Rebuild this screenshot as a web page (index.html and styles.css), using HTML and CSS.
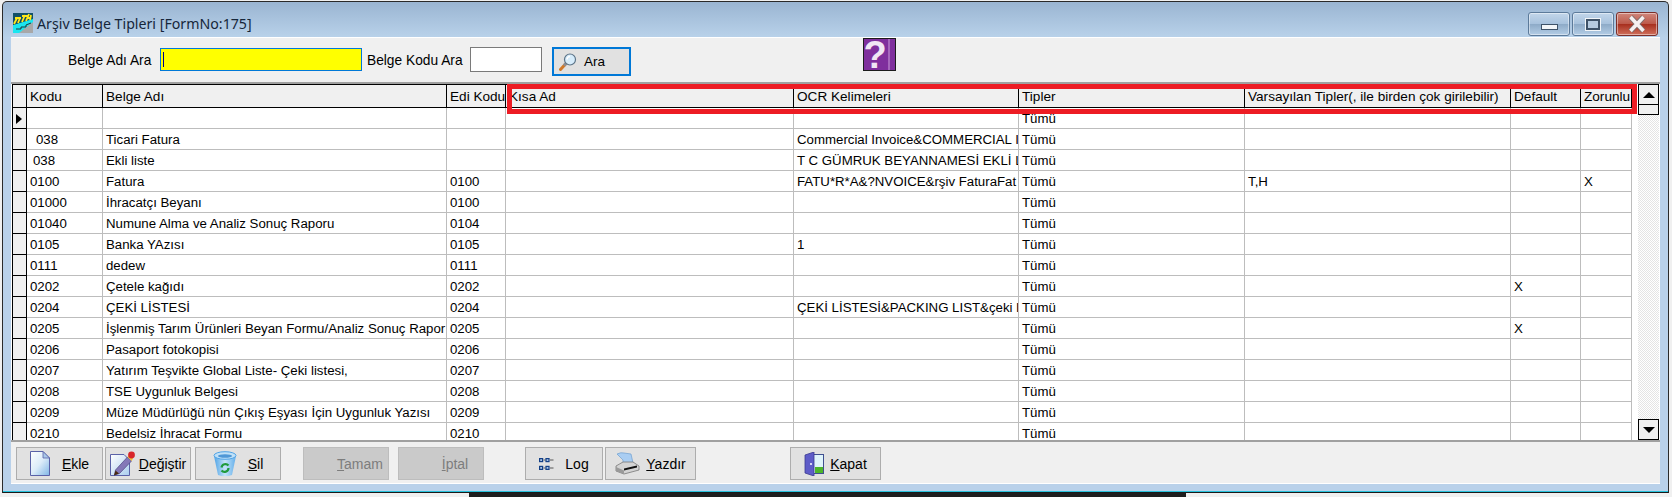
FILE: index.html
```html
<!DOCTYPE html>
<html lang="tr">
<head>
<meta charset="utf-8">
<title>Arşiv Belge Tipleri</title>
<link rel="stylesheet" href="styles.css">
</head>
<body>
<div class="window">
  <div class="titlebar">
    <svg class="app-icon" width="20" height="20" viewBox="0 0 20 20"><rect width="20" height="20" fill="#0f5f70"/><path d="M0 12L20 5V10L8 20H0Z" fill="#19e6f0"/><path d="M6 20L20 9V20Z" fill="#a8a8a8"/><path d="M0 0H20V6L0 12Z" fill="#125068"/><path d="M1 11L4 5M2 5H8M7 5L5 10M9 9L12 2M9 3H15M13 8L16 1M14 5H18M18 2L17 7" stroke="#ffe81a" stroke-width="1.8" fill="none"/><path d="M3 16L8 16L8 14L13 14L13 12L18 10" stroke="#222" stroke-width=".9" fill="none"/></svg>
    <span class="title-text">Arşiv Belge Tipleri [FormNo:175]</span>
    <div class="controls">
      <div class="ctl"><span class="ctl-min"></span></div>
      <div class="ctl"><span class="ctl-max"></span></div>
      <div class="ctl ctl-close"><svg width="22" height="20" viewBox="0 0 22 20"><path d="M4.5 3L17.5 17M17.5 3L4.5 17" stroke="#7a6a6a" stroke-width="5.4"/><path d="M4.5 3L17.5 17M17.5 3L4.5 17" stroke="#f6f0f0" stroke-width="3.6"/></svg></div>
    </div>
  </div>
  <div class="client">
    <div class="toolbar">
      <label class="lbl lbl-name">Belge Adı Ara</label>
      <div class="input input-name"><span class="caret"></span></div>
      <label class="lbl lbl-code">Belge Kodu Ara</label>
      <div class="input input-code"></div>
      <div class="btn-search">
        <svg width="18" height="18" viewBox="0 0 18 18"><path d="M6.5 11L1.5 16.5" stroke="#d0792a" stroke-width="3" stroke-linecap="round"/><path d="M7 10.5L5 12.5" stroke="#8a8f98" stroke-width="3"/><circle cx="11" cy="6.5" r="5.5" fill="#d6ecfb" stroke="#5c7488" stroke-width="1.2"/><path d="M8 6.5A3 3 0 0 1 11 3.5" stroke="#ffffff" stroke-width="1.4" fill="none"/></svg>
        <span>Ara</span>
      </div>
      <svg class="help" width="33" height="33" viewBox="0 0 33 33"><rect x=".5" y=".5" width="32" height="32" fill="#7f2f9d" stroke="#1c1c1c"/><rect x="25" y="1" width="2" height="31" fill="#a667bd"/><text x="12" y="30" text-anchor="middle" class="help-q">?</text></svg>
    </div>
    <div class="gridbox">
      <div class="gridview">
        <table class="grid">
          <colgroup><col class="c0"><col class="c1"><col class="c2"><col class="c3"><col class="c4"><col class="c5"><col class="c6"><col class="c7"><col class="c8"><col class="c9"></colgroup>
          <thead><tr><th class="ind"></th><th>Kodu</th><th>Belge Adı</th><th>Edi Kodu</th><th>Kısa Ad</th><th>OCR Kelimeleri</th><th>Tipler</th><th>Varsayılan Tipler(, ile birden çok girilebilir)</th><th>Default</th><th>Zorunlu</th></tr></thead>
          <tbody>
            <tr><td class="ind"><span class="arrow"></span></td><td></td><td></td><td></td><td></td><td></td><td>Tümü</td><td></td><td></td><td></td></tr>
            <tr><td class="ind"></td><td class="i9">038</td><td>Ticari Fatura</td><td></td><td></td><td>Commercial Invoice&amp;COMMERCIAL I</td><td>Tümü</td><td></td><td></td><td></td></tr>
            <tr><td class="ind"></td><td class="i6">038</td><td>Ekli liste</td><td></td><td></td><td>T C GÜMRUK BEYANNAMESİ EKLİ L</td><td>Tümü</td><td></td><td></td><td></td></tr>
            <tr><td class="ind"></td><td>0100</td><td>Fatura</td><td>0100</td><td></td><td>FATU*R*A&amp;?NVOICE&amp;rşiv FaturaFat</td><td>Tümü</td><td>T,H</td><td></td><td>X</td></tr>
            <tr><td class="ind"></td><td>01000</td><td>İhracatçı Beyanı</td><td>0100</td><td></td><td></td><td>Tümü</td><td></td><td></td><td></td></tr>
            <tr><td class="ind"></td><td>01040</td><td>Numune Alma ve Analiz Sonuç Raporu</td><td>0104</td><td></td><td></td><td>Tümü</td><td></td><td></td><td></td></tr>
            <tr><td class="ind"></td><td>0105</td><td>Banka YAzısı</td><td>0105</td><td></td><td>1</td><td>Tümü</td><td></td><td></td><td></td></tr>
            <tr><td class="ind"></td><td>0111</td><td>dedew</td><td>0111</td><td></td><td></td><td>Tümü</td><td></td><td></td><td></td></tr>
            <tr><td class="ind"></td><td>0202</td><td>Çetele kağıdı</td><td>0202</td><td></td><td></td><td>Tümü</td><td></td><td>X</td><td></td></tr>
            <tr><td class="ind"></td><td>0204</td><td>ÇEKİ LİSTESİ</td><td>0204</td><td></td><td>ÇEKİ LİSTESİ&amp;PACKING LIST&amp;çeki l</td><td>Tümü</td><td></td><td></td><td></td></tr>
            <tr><td class="ind"></td><td>0205</td><td>İşlenmiş Tarım Ürünleri Beyan Formu/Analiz Sonuç Rapor</td><td>0205</td><td></td><td></td><td>Tümü</td><td></td><td>X</td><td></td></tr>
            <tr><td class="ind"></td><td>0206</td><td>Pasaport fotokopisi</td><td>0206</td><td></td><td></td><td>Tümü</td><td></td><td></td><td></td></tr>
            <tr><td class="ind"></td><td>0207</td><td>Yatırım Teşvikte Global Liste- Çeki listesi,</td><td>0207</td><td></td><td></td><td>Tümü</td><td></td><td></td><td></td></tr>
            <tr><td class="ind"></td><td>0208</td><td>TSE Uygunluk Belgesi</td><td>0208</td><td></td><td></td><td>Tümü</td><td></td><td></td><td></td></tr>
            <tr><td class="ind"></td><td>0209</td><td>Müze Müdürlüğü nün Çıkış Eşyası İçin Uygunluk Yazısı</td><td>0209</td><td></td><td></td><td>Tümü</td><td></td><td></td><td></td></tr>
            <tr><td class="ind"></td><td>0210</td><td>Bedelsiz İhracat Formu</td><td>0210</td><td></td><td></td><td>Tümü</td><td></td><td></td><td></td></tr>
          </tbody>
        </table>
        <div class="redbox"></div>
      </div>
      <div class="scrollbar">
        <div class="sb-btn"><span class="tri-up"></span></div>
        <div class="sb-thumb"></div>
        <div class="sb-track"></div>
        <div class="sb-btn"><span class="tri-down"></span></div>
      </div>
    </div>
    <div class="actions">
      <div class="btn b-ekle">
        <svg width="20" height="25" viewBox="0 0 20 25"><defs><linearGradient id="docg" x1="0" y1="0" x2="1" y2="1"><stop offset="0" stop-color="#ffffff"/><stop offset=".5" stop-color="#dcecf9"/><stop offset="1" stop-color="#7fb6e6"/></linearGradient></defs><path d="M.5.5H13L19.5 7V24.5H.5Z" fill="url(#docg)" stroke="#5a62a8"/><path d="M13 .5V7H19.5Z" fill="#a9c8e8" stroke="#5a62a8" stroke-width=".8"/></svg>
        <span><u>E</u>kle</span>
      </div>
      <div class="btn b-degistir">
        <svg width="25" height="25" viewBox="0 0 25 25"><defs><linearGradient id="pag" x1="0" y1="0" x2="1" y2="1"><stop offset="0" stop-color="#ffffff"/><stop offset="1" stop-color="#a9cdee"/></linearGradient></defs><path d="M.5 3.5H14L19.5 9V24.5H.5Z" fill="url(#pag)" stroke="#5a62a8"/><path d="M5.5 19L17.5 6L21.5 10L9.5 22.5L4.5 24Z" fill="#8478b8" stroke="#4a4480" stroke-width=".7"/><path d="M4 24.5L5.5 19.5L9 22.5Z" fill="#4a2a10"/><path d="M17.5 6L19.5 4L23 7.5L21.5 10Z" fill="#f3c23a"/><circle cx="21.5" cy="4" r="3.4" fill="#d8262a"/></svg>
        <span><u>D</u>eğiştir</span>
      </div>
      <div class="btn b-sil">
        <svg width="24" height="26" viewBox="0 0 24 26"><defs><linearGradient id="bing" x1="0" y1="0" x2="1" y2="0"><stop offset="0" stop-color="#4fa3e6"/><stop offset=".5" stop-color="#c4e3f8"/><stop offset="1" stop-color="#62aeea"/></linearGradient></defs><path d="M1 5L5 24Q12 26.5 19 24L23 5Z" fill="url(#bing)"/><ellipse cx="12" cy="4.5" rx="11" ry="3.8" fill="#bfe0f7" stroke="#4fa3e6"/><ellipse cx="12" cy="5" rx="7" ry="1.8" fill="#4f97d6"/><path d="M8.5 16.5A4 4 0 0 1 15.5 14.5M15.5 17A4 4 0 0 1 8.5 19.5" stroke="#1f9a3c" stroke-width="2.2" fill="none"/></svg>
        <span><u>S</u>il</span>
      </div>
      <div class="btn btn-off b-tamam"><span class="ghost"></span><span><u>T</u>amam</span></div>
      <div class="btn btn-off b-iptal"><span class="ghost"></span><span><u>İ</u>ptal</span></div>
      <div class="btn b-log">
        <svg width="15" height="12" viewBox="0 0 15 12"><path d="M4.5 2H6.5M11 2H14.5M4.5 10H6.5M11 10H14.5" stroke="#555" stroke-width="1"/><g fill="#a9c4e6" stroke="#123f86" stroke-width="1.2"><rect x=".6" y=".6" width="3" height="3"/><rect x=".6" y="8.4" width="3" height="3"/><rect x="7" y=".6" width="3" height="3"/><rect x="7" y="8.4" width="3" height="3"/></g></svg>
        <span>Log</span>
      </div>
      <div class="btn b-yazdir">
        <svg width="25" height="23" viewBox="0 0 25 23"><path d="M2 2Q6 0 9 1L16 2L18 11L8 12Q9 7 6 6Z" fill="#a9cdf2" stroke="#6f9fd0" stroke-width=".7"/><path d="M1 14L8 10H18L24 14V18L9 22L1 19Z" fill="#d4d4d4" stroke="#777" stroke-width=".8"/><path d="M9 16.5L22 13.5V15.5L9 18.5Z" fill="#111"/><path d="M1 19L9 22V18.5L1 15Z" fill="#9a9a9a"/></svg>
        <span><u>Y</u>azdır</span>
      </div>
      <div class="btn b-kapat">
        <svg width="20" height="24" viewBox="0 0 20 24"><rect x="9.5" y="2.5" width="10" height="19" fill="#dff4fb" stroke="#3f4f8f"/><rect x="11" y="15" width="8" height="6" fill="#4cb52a"/><path d="M1 3L10 0V24L1 21Z" fill="#5e5cc8" stroke="#3a3a90" stroke-width=".8"/><circle cx="7" cy="12" r="1" fill="#ffffff"/></svg>
        <span><u>K</u>apat</span>
      </div>
    </div>
  </div>
</div>
<div class="taskbar-strip"></div>
</body>
</html>
```
FILE: styles.css
```css
* { box-sizing: border-box; }
html, body { margin: 0; padding: 0; }
body {
  width: 1672px;
  height: 497px;
  overflow: hidden;
  background: #f0f0f0;
  font-family: "Liberation Sans", Arial, sans-serif;
  font-size: 14px;
  color: #000;
}
.window {
  width: 1667px;
  height: 492px;
  margin: 1px 0 0 2px;
  padding: 0 8px 8px 8px;
  border: 1px solid #2a2a2a;
  border-bottom-color: #1a1a1a;
  border-radius: 5px 5px 0 0;
  box-shadow: inset 0 -1px 0 #27c2dc;
  background: linear-gradient(#9ab5d2 0, #b9d2ea 36px, #b9d1ea 36px);
  display: flex;
  flex-direction: column;
}
.titlebar {
  height: 36px;
  display: flex;
  align-items: flex-start;
  flex: none;
}
.app-icon { margin: 11px 0 0 2px; flex: none; }
.title-text {
  margin: 13px 0 0 4px;
  font-family: "Noto Sans", "Open Sans", sans-serif;
  font-size: 14.2px;
  line-height: 18px;
  color: #16263a;
}
.controls { margin-left: auto; display: flex; gap: 2px; margin-top: 10px; margin-right: 2px; }
.ctl {
  width: 42px;
  height: 24px;
  border: 1px solid #5c7a9a;
  border-radius: 3px;
  background: linear-gradient(#c2d6ea 0, #a8c2dd 48%, #8eabc8 52%, #b3cde6 100%);
  box-shadow: inset 0 0 0 1px rgba(255,255,255,.45);
  display: flex;
  align-items: center;
  justify-content: center;
}
.ctl-min { width: 17px; height: 6px; margin-top: 5px; background: #f2f5f8; border: 1px solid #3e5268; }
.ctl-max { width: 14px; height: 11px; border: 2px solid #3e5268; background: #b6cbe0; outline: 1px solid #f2f5f8; }
.ctl-close {
  border-color: #7c2f2a;
  background: linear-gradient(#d0877c 0, #bd5a4b 48%, #a8301f 52%, #d0705c 100%);
}
.client {
  height: 445px;
  flex: none;
  background: #f0f0f0;
  box-shadow: 0 1px 0 #ffffff, 0 -1px 0 #ffffff;
  display: flex;
  flex-direction: column;
}
.toolbar {
  height: 44px;
  flex: none;
  display: flex;
  align-items: flex-start;
}
.lbl { line-height: 16px; margin-top: 15px; flex: none; white-space: nowrap; font-size: 13.75px; }
.lbl-name { margin-left: 57px; width: 92px; }
.lbl-code { margin-left: 5px; width: 103px; }
.input { flex: none; background: #fff; }
.input-name {
  width: 202px;
  height: 23px;
  margin-top: 10px;
  background: #ffff00;
  border: 1px solid #0078d7;
  padding: 3px 0 0 2px;
}
.caret { display: block; width: 1px; height: 15px; background: #00008a; }
.input-code { width: 72px; height: 25px; margin-top: 9px; border: 1px solid #7a7a7a; }
.btn-search {
  width: 79px;
  height: 29px;
  margin: 9px 0 0 10px;
  border: 2px solid #0078d7;
  background: #e1e1e1;
  display: flex;
  align-items: center;
  gap: 7px;
  padding-left: 5px;
  flex: none;
  font-size: 13.5px;
}
.help { flex: none; margin-left: 232px; }
.help-q { font-family: "Liberation Sans", sans-serif; font-weight: bold; font-size: 38px; fill: #f0e6f4; }
.gridbox {
  height: 360px;
  flex: none;
  display: flex;
  padding-left: 1px;
  border-top: 2px solid #a0a0a0;
  border-bottom: 2px solid #a0a0a0;
  background: #fff;
}
.gridview { width: 1626px; height: 356px; overflow: hidden; position: relative; flex: none; background: #fff; }
.grid {
  width: 1620px;
  table-layout: fixed;
  border-collapse: separate;
  border-spacing: 0;
}
.c0 { width: 15px; } .c1 { width: 76px; } .c2 { width: 344px; } .c3 { width: 59px; }
.c4 { width: 288px; } .c5 { width: 225px; } .c6 { width: 226px; } .c7 { width: 266px; }
.c8 { width: 70px; } .c9 { width: 51px; }
th, td {
  padding: 1px 0 0 3px;
  overflow: hidden;
  white-space: nowrap;
  font-weight: normal;
  text-align: left;
  line-height: 19px;
}
th {
  height: 24px;
  font-size: 13.6px;
  background: #f0f0f0;
  border-top: 1px solid #000;
  border-right: 1px solid #000;
  border-bottom: 1px solid #000;
  vertical-align: middle;
}
td {
  height: 21px;
  font-size: 13.25px;
  background: #fff;
  border-right: 1px solid #bdbdbd;
  border-bottom: 1px solid #bdbdbd;
}
td.i9 { padding-left: 9px; }
td.i6 { padding-left: 6px; }
th.ind, td.ind {
  background: #f0f0f0;
  border-left: 1px solid #000;
  border-right: 1px solid #000;
  border-bottom: 1px solid #000;
  padding: 0;
}
.arrow {
  display: block;
  width: 0;
  height: 0;
  margin: 1px 0 0 3px;
  border-left: 6px solid #000;
  border-top: 5px solid transparent;
  border-bottom: 5px solid transparent;
}
.redbox {
  position: absolute;
  left: 495px;
  top: 0;
  width: 1130px;
  height: 30px;
  border: 5px solid #ed1c24;
  pointer-events: none;
}
.scrollbar { width: 21px; flex: none; display: flex; flex-direction: column; }
.sb-btn {
  height: 21px;
  flex: none;
  background: #f0f0f0;
  border: 1px solid #000;
  display: flex;
  align-items: center;
  justify-content: center;
}
.sb-thumb { height: 10px; flex: none; background: #f0f0f0; border: 1px solid #000; border-top: 0; }
.sb-track {
  flex: 1;
  background-color: #fff;
  background-image: conic-gradient(#e4e4e4 25%, #fff 0 50%, #e4e4e4 0 75%, #fff 0);
  background-size: 2px 2px;
}
.tri-up { border-left: 6px solid transparent; border-right: 6px solid transparent; border-bottom: 6px solid #000; }
.tri-down { border-left: 6px solid transparent; border-right: 6px solid transparent; border-top: 6px solid #000; }
.actions { flex: 1; display: flex; align-items: flex-start; padding: 5px 0 0 5px; }
.btn {
  height: 33px;
  flex: none;
  background: #e1e1e1;
  border: 1px solid #adadad;
  display: flex;
  align-items: center;
  justify-content: center;
  white-space: nowrap;
}
.btn-off { background: #cacaca; color: #7d7d7d; border-color: #bdbdbd; }
.ghost { width: 22px; height: 1px; }
.b-ekle { width: 87px; gap: 12px; }
.b-degistir { width: 86px; gap: 4px; margin-left: 2px; }
.b-sil { width: 86px; gap: 11px; margin-left: 4px; }
.b-tamam { width: 86px; gap: 6px; margin-left: 22px; }
.b-iptal { width: 86px; gap: 6px; margin-left: 9px; }
.b-log { width: 78px; gap: 11px; margin-left: 41px; }
.b-yazdir { width: 91px; gap: 6px; margin-left: 2px; }
.b-kapat { width: 91px; gap: 6px; margin-left: 94px; }
.taskbar-strip { width: 717px; height: 4px; margin-left: 469px; background: #1e1e1e; }
```
